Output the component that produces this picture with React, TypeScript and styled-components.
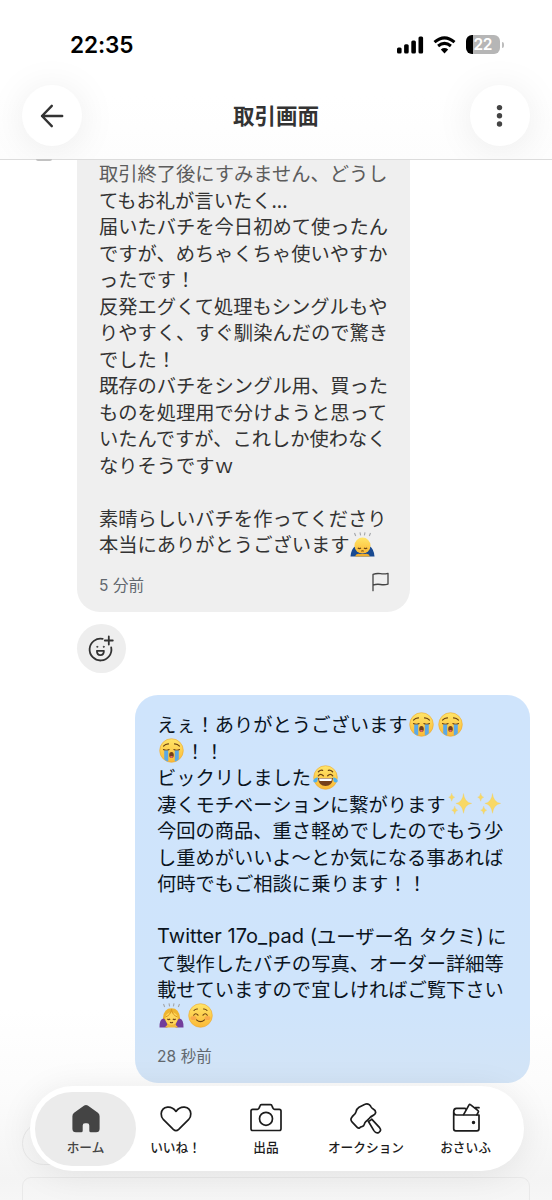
import React from "react";
import styled, { createGlobalStyle, css } from "styled-components";

const Global = createGlobalStyle`
  * { box-sizing: border-box; }
  html, body { margin: 0; padding: 0; background: #fff; }
  body { font-family: Inter, "Noto Sans CJK JP", sans-serif; color: #2f2f2f; }
  svg { display: block; flex: none; }
  button { border: 0; padding: 0; font: inherit; color: inherit; }
`;

const Screen = styled.div`
  position: relative;
  width: 552px;
  height: 1200px;
  overflow: hidden;
  display: flex;
  flex-direction: column;
  background: #fff;
`;

const TopArea = styled.header`
  flex: none;
  height: 160px;
  overflow: hidden;
  display: flex;
  flex-direction: column;
  border-bottom: 1px solid #dcdcdc;
  background: linear-gradient(#fff 60%, #fdfdfd);
`;

const StatusBar = styled.div`
  height: 86px;
  flex: none;
  display: flex;
  align-items: center;
  justify-content: space-between;
  padding: 3px 48.5px 0 70px;
  color: #000;
`;

const Clock = styled.span`
  font: 600 22.6px/28px Inter, sans-serif;
  letter-spacing: -0.1px;
`;

const StatusIcons = styled.div`
  display: flex;
  align-items: center;
  gap: 9px;
`;

const NavRow = styled.div`
  display: flex;
  align-items: center;
  justify-content: space-between;
  padding: 0 22px;
  height: 59px;
`;

const RoundButton = styled.button`
  width: 60px;
  height: 61px;
  border-radius: 50%;
  background: #fff;
  display: grid;
  place-items: center;
  box-shadow: 0 3px 38px rgba(0, 0, 0, 0.08);
`;

const Title = styled.h1`
  margin: 0;
  padding-bottom: 1px;
  font: 700 21.5px/30px "Noto Sans CJK JP", sans-serif;
  color: #333;
`;

const Thread = styled.main`
  flex: 1;
  min-height: 0;
  display: flex;
  flex-direction: column;
  align-items: flex-start;
  padding: 0 22px 0 77px;
  background: linear-gradient(#fff 0, #fff 850px, #fbfbfb 940px, #f4f4f4 1020px, #f6f6f6 1040px);
`;

const Bubble = styled.section<{ $mine?: boolean }>`
  flex: none;
  display: flex;
  flex-direction: column;
  ${(p) =>
    p.$mine
      ? css`
          align-self: flex-end;
          width: 395px;
          height: 388px;
          padding: 16px 22px 0;
          margin-top: 22px;
          border-radius: 23px;
          color: #0b141e;
          background: linear-gradient(#cfe4fc 0, #cfe4fb 82%, #d3e4f6 100%);
        `
      : css`
          width: 333px;
          height: 452px;
          padding: 0 21.5px 0 22px;
          border-radius: 0 0 23px 23px;
          color: #333;
          background: #efefef;
        `}
`;

const Line = styled.div<{ $faded?: boolean }>`
  height: 26.5px;
  display: flex;
  align-items: center;
  white-space: pre;
  font: 400 19.27px/26.5px "Noto Sans CJK JP", sans-serif;
  ${(p) => p.$faded && "color: #5c5c5c;"}
`;

const Latin = styled.span<{ $gap?: number }>`
  font: 400 20px/26.5px Inter, sans-serif;
  letter-spacing: 0.05px;
  margin-right: ${(p) => p.$gap ?? 0}px;
`;

const Meta = styled.div`
  display: flex;
  align-items: center;
  justify-content: space-between;
  height: 24px;
  margin-top: 16px;
`;

const Time = styled.time`
  font: 400 15.5px/24px Inter, "Noto Sans CJK JP", sans-serif;
  letter-spacing: 0.1px;
  color: #62686e;
`;

const FlagIcon = styled.svg`
  margin-bottom: 7px;
`;

const Reaction = styled.button`
  flex: none;
  width: 49px;
  height: 49px;
  margin-top: 12px;
  border-radius: 50%;
  background: #eee;
  display: grid;
  place-items: center;
`;

const AvatarEdge = styled.div`
  position: absolute;
  left: 36px;
  top: 159px;
  width: 16px;
  height: 2px;
  border-radius: 0 0 8px 8px;
  background: #c2c2c2;
`;

const ComposerPill = styled.div`
  position: absolute;
  left: 22px;
  top: 1122px;
  width: 180px;
  height: 43px;
  border: 1px solid #e8e8e8;
  border-radius: 22px;
`;

const ComposerBox = styled.div`
  position: absolute;
  left: 22px;
  top: 1177px;
  width: 508px;
  height: 40px;
  border: 1px solid #e9e9e9;
  border-radius: 9px;
`;

const TabBar = styled.nav`
  position: absolute;
  left: 30px;
  top: 1086px;
  width: 494px;
  height: 85px;
  padding: 6px 5px 5px;
  border-radius: 43px;
  background: #fff;
  display: grid;
  grid-template-columns: 101px 79px 102px 98px 101px;
  box-shadow: 0 4px 34px rgba(0, 0, 0, 0.08);
`;

const Tab = styled.button<{ $active?: boolean }>`
  display: flex;
  flex-direction: column;
  align-items: center;
  padding-top: 10px;
  gap: 3px;
  height: 74px;
  border-radius: 37px;
  background: ${(p) => (p.$active ? "#ebebeb" : "transparent")};
  color: ${(p) => (p.$active ? "#444" : "#1c1c1c")};
`;

const TabLabel = styled.span`
  font: 500 12.7px/20px "Noto Sans CJK JP", sans-serif;
  white-space: nowrap;
`;

const EmojiBox = styled.span<{ $before?: number; $after?: number }>`
  display: block;
  flex: none;
  width: 25px;
  height: 25px;
  margin: 0 ${(p) => p.$after ?? 3.6}px 0 ${(p) => p.$before ?? 1.5}px;
`;

type EmojiKind = "cry" | "joy" | "sparkle" | "bowMan" | "bowWoman" | "smile";

const Face = () => <circle cx="12.5" cy="12.5" r="11.8" fill="url(#skin)" stroke="#eda82f" strokeWidth=".6" />;

const emojiArt: Record<EmojiKind, React.ReactNode> = {
  cry: (
    <>
      <Face />
      <path d="M4.5 8.2q2-2.4 5-2.3M20.5 8.2q-2-2.4-5-2.3M4.5 11.5q2.8 1.6 5.6 0M14.9 11.5q2.8 1.6 5.6 0" fill="none" stroke="#6c4212" strokeWidth="1.1" strokeLinecap="round" />
      <path d="M5.2 12.5h4v11q-2.5-.5-4-2.3zM15.8 12.5h4v8.7q-1.5 1.8-4 2.3z" fill="#5ca9e6" />
      <ellipse cx="12.5" cy="17" rx="2.3" ry="2.9" fill="#74401b" />
      <path d="M11 18.6q1.5-1 3 0l-.6 1.1h-1.8z" fill="#ef6478" />
    </>
  ),
  joy: (
    <>
      <Face />
      <path d="M5.4 6.8q2-2 4.2-1.5M19.6 6.8q-2-2-4.2-1.5M5.3 10.8q2.2-3 5 0M14.7 10.8q2.8-3 5 0" fill="none" stroke="#6c4212" strokeWidth="1.3" strokeLinecap="round" />
      <path d="M5 13h15q-.8 8-7.5 8T5 13z" fill="#76401b" />
      <path d="M6 13.6h13l-.6 2.4H6.6z" fill="#fff" />
      <path d="M4.7 12.2q.5 5.4-2.6 5.3Q-.3 17.3.5 15q1-2.3 4.2-2.8zM20.3 12.2q-.5 5.4 2.6 5.3 2.4-.2 1.6-2.5-1-2.3-4.2-2.8z" fill="#4fb2f0" />
    </>
  ),
  sparkle: (
    <g fill="#f8d865" stroke="#f3cb58" strokeWidth=".3">
      <path d="M15.500 2.500q1 9 8.200 9.900-7.200.9-8.200 9.900-1-9-7.600-9.900 6.600-.9 7.600-9.900z" />
      <path d="M3.700 2.200q.5 3.400 3 4-2.500.6-3 4-.5-3.400-3-4 2.500-.6 3-4zM6.700 15.200q.5 3.500 3 4-2.500.5-3 4-.5-3.500-3-4 2.500-.5 3-4z" />
    </g>
  ),
  bowMan: (
    <>
      <path d="M4.500 1l1.200 3M10 .3l.6 3M15 .3l-.6 3M20.500 1l-1.200 3" stroke="#a4a6aa" strokeWidth="1.100" />
      <path d="M.5 24.500q.5-7.500 5-10.500h14q4.500 3 5 10.500z" fill="#194a91" />
      <path d="M5 24.500q1-3.500 5-2.500h5q4-1 5 2.500z" fill="#eead2f" />
      <circle cx="12.500" cy="13.600" r="8" fill="url(#skin)" />
      <path d="M7.800 16q1.700 1.200 3.200 0M14 16q1.500 1.200 3.200 0M11.300 19.200q1.200-.8 2.400 0" fill="none" stroke="#714516" strokeWidth="1.100" />
    </>
  ),
  bowWoman: (
    <>
      <path d="M4.500 1l1.200 3M10 .3l.6 3M15 .3l-.6 3M20.500 1l-1.200 3" stroke="#a4a6aa" strokeWidth="1.100" />
      <path d="M4 20Q3 5.300 12.500 5.300T21 20l-3 2H7z" fill="#eeb42f" />
      <path d="M.5 24.500Q.3 16 4.500 15.500q3.500 1 4 9zM24.500 24.500q.2-8.500-4-9-3.500 1-4 9z" fill="#723e9b" />
      <ellipse cx="12.500" cy="15.500" rx="6.300" ry="6.300" fill="#ffd75c" />
      <path d="M12.500 6q-.5 6-6 8M12.500 6q.5 6 6 8" fill="none" stroke="#d99721" strokeWidth="1" />
      <path d="M8.300 16q1.500 1.200 2.900 0M13.800 16q1.400 1.200 2.900 0M11 19.200q1.500 1 3 0" fill="none" stroke="#714516" strokeWidth="1.100" />
      <path d="M6 24.500q1-3 4-2.500h5q3-.5 4 2.500z" fill="#f3ba3a" />
    </>
  ),
  smile: (
    <>
      <Face />
      <ellipse cx="5.500" cy="15" rx="3" ry="2" fill="#f68c4a" opacity=".5" />
      <ellipse cx="19.500" cy="15" rx="3" ry="2" fill="#f68c4a" opacity=".5" />
      <path d="M6 7.500q1.500-1.800 3.500-1.500M19 7.500q-1.500-1.800-3.500-1.500M5.700 12.200q2-3 4.300 0M15 12.200q2.300-3 4.300 0M8.500 16.800q4 3.700 8 0" fill="none" stroke="#6c4212" strokeWidth="1.100" strokeLinecap="round" />
    </>
  ),
};

const Emoji = ({ kind, before, after }: { kind: EmojiKind; before?: number; after?: number }) => (
  <EmojiBox $before={before} $after={after}>
    <svg width="25" height="25" viewBox="0 0 25 25">
      <defs>
        <linearGradient id="skin" x1="0" y1="0" x2="0" y2="1">
          <stop offset="0" stopColor="#ffe568" />
          <stop offset="1" stopColor="#fbb936" />
        </linearGradient>
      </defs>
      {emojiArt[kind]}
    </svg>
  </EmojiBox>
);

const BatteryBox = styled.div`
  display: flex;
  align-items: center;
  gap: 2px;
  margin-left: 1px;
`;

const BatteryLevel = styled.div`
  width: 33.5px;
  height: 19px;
  border-radius: 6px;
  background: linear-gradient(90deg, #000 0 7px, #b6b6b6 7px);
  color: #fff;
  font: 600 15.5px/19px Inter, sans-serif;
  letter-spacing: -0.3px;
  text-align: center;
`;

const BatteryTip = styled.i`
  width: 2px;
  height: 6px;
  border-radius: 0 2px 2px 0;
  background: #bdbdbd;
`;

const Signal = () => (
  <svg width="27" height="18" viewBox="0 0 27 18">
    <rect x="0" y="11.500" width="4.600" height="6" rx="1.500" />
    <rect x="7.100" y="8.300" width="4.600" height="9.200" rx="1.500" />
    <rect x="14.300" y="4.500" width="4.600" height="13" rx="1.500" />
    <rect x="21.500" y=".5" width="4.600" height="17" rx="1.500" />
  </svg>
);

const Wifi = () => (
  <svg width="23" height="18" viewBox="0 0 23 18">
    <path d="M1.500 6.200q10-8.700 20 0M5.100 10q6.400-5.300 12.800 0" fill="none" stroke="#000" strokeWidth="3" />
    <path d="M7.800 13.400q3.700-2.900 7.400 0l-3.700 4z" />
  </svg>
);

const incoming = [
  "取引終了後にすみません、どうし",
  "てもお礼が言いたく...",
  "届いたバチを今日初めて使ったん",
  "ですが、めちゃくちゃ使いやすか",
  "ったです！",
  "反発エグくて処理もシングルもや",
  "りやすく、すぐ馴染んだので驚き",
  "でした！",
  "既存のバチをシングル用、買った",
  "ものを処理用で分けようと思って",
  "いたんですが、これしか使わなく",
  "なりそうですｗ",
  "",
  "素晴らしいバチを作ってくださり",
];

const TabIcon = ({ children }: { children: React.ReactNode }) => (
  <svg width="32" height="32" viewBox="0 0 32 32" fill="none" stroke="currentColor" strokeWidth="1.700" strokeLinecap="round" strokeLinejoin="round">
    {children}
  </svg>
);

const tabs = [
  {
    label: "ホーム",
    icon: (
      <path d="M14.200 3.600q1.800-1.300 3.600 0l10.100 7.200q1.700 1.300 1.700 3.400v12.500q0 3.500-3.500 3.500h-5.300q-1.500 0-1.500-1.500v-5.300q0-2.200-2.300-2.200h-2q-2.300 0-2.300 2.200v5.300q0 1.500-1.500 1.500H5.900q-3.500 0-3.500-3.500V14.200q0-2.100 1.700-3.400z" fill="currentColor" stroke="none" />
    ),
  },
  {
    label: "いいね！",
    icon: <path d="M16 28.700q-1.300 0-2.700-1.300L3.500 17.700Q1 14.900 1.200 11.700 1.700 6 7.500 5.200q5-.5 8.500 4.200 3.500-4.700 8.500-4.200 5.800.8 6.300 6.500.2 3.200-2.300 6l-9.800 9.700Q17.300 28.700 16 28.700z" />,
  },
  {
    label: "出品",
    icon: (
      <>
        <path d="M2.700 7.300h4.800q1.200 0 1.600-1.200l.8-2Q10.300 2.700 11.500 2.700h9q1.200 0 1.600 1.400l.8 2q.4 1.200 1.600 1.200h4.800q1.700 0 1.700 1.700v17.800q0 1.700-1.700 1.700H2.700Q1 28.500 1 26.800V9q0-1.700 1.700-1.700z" />
        <circle cx="16" cy="16.800" r="6.500" />
      </>
    ),
  },
  {
    label: "オークション",
    icon: (
      <>
        <path d="M15 2.300q2.200-1.200 4.200.4 1.300 1.200 2 2.400.8 1.200 2 1.900 2.800 1.700 2.400 3.800-.4 1.700-2.400 2.600-2.200 1-3.900 2.900-1.700 1.800-3.500 3.400-1.200 1.200-1.500 2.700-.4 1.800-2.500 2.300-1.200.2-2 1-1.300.9-2.600-.4l-5-5.200Q.2 18 1.400 16q.9-1.900 2.400-3 1.600-1 2.100-3Q6.600 6.700 9 5.200z" />
        <path d="m18.300 19.300 5.600 9.300q2.200 3.300 5 1.800 3-2 .7-4.700l-7.900-8.500q-1.500 1.800-3.400 2.100z" />
      </>
    ),
  },
  {
    label: "おさいふ",
    icon: (
      <>
        <path d="M29 13H6.500q-2.800 0-2.800-3.200 0-3.500 2.800-3.500h8.500q1 0 1 1M3.700 9.800v17q0 2 2 2H27q2 0 2-2V13" />
        <path d="m13.600 12.600 5.600-9.900q.5-.7 1.200-.1l7.600 6q.8.700.3 1.500l-1.500 2.700M25.300 5.700H29" />
        <circle cx="23.500" cy="20.500" r=".9" fill="currentColor" />
      </>
    ),
  },
];

export default function App() {
  return (
    <Screen>
      <Global />
      <TopArea>
        <StatusBar>
          <Clock>22:35</Clock>
          <StatusIcons>
            <Signal />
            <Wifi />
            <BatteryBox>
              <BatteryLevel>22</BatteryLevel>
              <BatteryTip />
            </BatteryBox>
          </StatusIcons>
        </StatusBar>
        <NavRow>
          <RoundButton aria-label="戻る">
            <svg width="24" height="24" viewBox="0 0 24 24" fill="none" stroke="#333" strokeWidth="2.400" strokeLinecap="round" strokeLinejoin="round">
              <path d="M22.200 12H2M11.800 1.800 2 12l9.800 10.200" />
            </svg>
          </RoundButton>
          <Title>取引画面</Title>
          <RoundButton aria-label="メニュー">
            <svg width="8" height="26" viewBox="0 0 8 26" fill="#444">
              <circle cx="3.500" cy="4.600" r="2.700" />
              <circle cx="3.500" cy="12.800" r="2.700" />
              <circle cx="3.500" cy="21" r="2.700" />
            </svg>
          </RoundButton>
        </NavRow>
      </TopArea>

      <Thread>
        <Bubble>
          {incoming.map((text, i) => (
            <Line key={i} $faded={i === 0}>{text}</Line>
          ))}
          <Line>本当にありがとうございます<Emoji kind="bowMan" before={1} /></Line>
          <Meta>
            <Time>5 分前</Time>
            <FlagIcon width="17" height="20" viewBox="0 0 17 20" fill="none" stroke="#444" strokeWidth="1.300" strokeLinejoin="round" strokeLinecap="round">
              <path d="M1 18.700V2.400q3.500-1.300 7.500-.7T16 1.300v10.800q-3.500 1.100-7.500.4T1 13.200" />
            </FlagIcon>
          </Meta>
        </Bubble>

        <Reaction aria-label="リアクション">
          <svg width="27" height="27" viewBox="0 0 27 27" fill="none" stroke="#333" strokeWidth="1.800" strokeLinecap="round" strokeLinejoin="round">
            <path d="M14.700 3.900A10.900 10.900 0 1 0 23.200 12.500M20.800 1.500v8M16.800 5.500h8" />
            <path d="M8.900 15.800h7q0 4.300-3.500 4.300t-3.500-4.300z" />
            <circle cx="9.200" cy="11.800" r=".6" fill="#333" strokeWidth=".6" />
            <circle cx="15.700" cy="11.800" r=".6" fill="#333" strokeWidth=".6" />
          </svg>
        </Reaction>

        <Bubble $mine>
          <Line>えぇ！ありがとうございます<Emoji kind="cry" /><Emoji kind="cry" before={0.5} /></Line>
          <Line><Emoji kind="cry" after={2} />！！</Line>
          <Line>ビックリしました<Emoji kind="joy" /></Line>
          <Line>凄くモチベーションに繋がります<Emoji kind="sparkle" before={2} /><Emoji kind="sparkle" before={0.5} /></Line>
          <Line>今回の商品、重さ軽めでしたのでもう少</Line>
          <Line>し重めがいいよ〜とか気になる事あれば</Line>
          <Line>何時でもご相談に乗ります！！</Line>
          <Line />
          <Line><Latin>Twitter 17o_pad (</Latin>ユーザー名<Latin> </Latin>タクミ<Latin $gap={3.5}>)</Latin>に</Line>
          <Line>て製作したバチの写真、オーダー詳細等</Line>
          <Line>載せていますので宜しければご覧下さい</Line>
          <Line><Emoji kind="bowWoman" /><Emoji kind="smile" before={0.5} /></Line>
          <Meta>
            <Time>28 秒前</Time>
          </Meta>
        </Bubble>
      </Thread>

      <AvatarEdge />
      <ComposerPill />
      <ComposerBox />
      <TabBar>
        {tabs.map((tab, i) => (
          <Tab key={tab.label} $active={i === 0}>
            <TabIcon>{tab.icon}</TabIcon>
            <TabLabel>{tab.label}</TabLabel>
          </Tab>
        ))}
      </TabBar>
    </Screen>
  );
}
